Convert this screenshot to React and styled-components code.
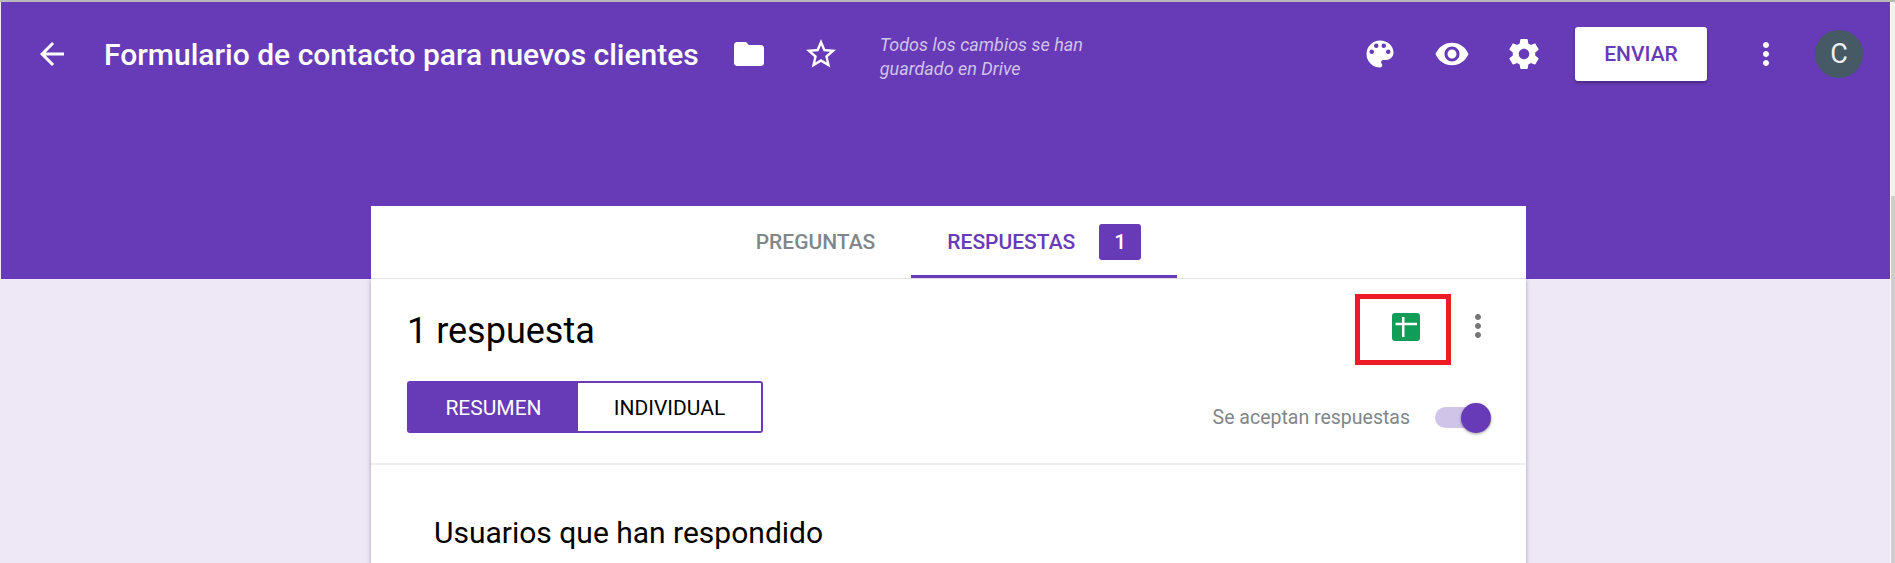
import styled, { createGlobalStyle } from "styled-components";

const purple = "#673ab7";

const GlobalStyle = createGlobalStyle`
  html, body {
    margin: 0;
    height: 100%;
    overflow: hidden;
    background: #fff;
    font-family: Roboto, "Liberation Sans", sans-serif;
  }
`;

const Window = styled.div`
  display: flex;
  height: 563px;
  padding-left: 1px;
  border-top: 2px solid #b9b9bb;
  box-sizing: border-box;
  background: #ece8f6;
`;

const Page = styled.div`
  flex: 1;
  min-width: 0;
  overflow: hidden;
  background: #ede7f6;
`;

const Scrollbar = styled.div`
  width: 4px;
  border-left: 1px solid #fff;
  background: #f1f1f1;
  padding-top: 194px;
  &::after {
    content: "";
    display: block;
    height: 100%;
    background: #cdcdcd;
  }
`;

const Hero = styled.header`
  height: 277px;
  background: ${purple};
  color: #fff;
`;

const Toolbar = styled.div`
  display: flex;
  align-items: center;
  height: 70px;
  padding: 17px 0 0 33px;
`;

const IconSlot = styled.span`
  display: flex;
  align-items: center;
  justify-content: center;
  flex: none;
  width: 36px;
  height: 36px;
  margin-left: ${(p) => p.$ml || 0}px;
`;

const Title = styled.h1`
  margin: 2px 0 0 34px;
  font-size: 30px;
  font-weight: 500;
  white-space: nowrap;
  line-height: 36px;
`;

const SaveNote = styled.div`
  width: 240px;
  margin: 5px 0 0 41px;
  font-size: 18px;
  font-style: italic;
  line-height: 24px;
  color: #d1c4e9;
`;

const Spacer = styled.div`
  flex: 1;
`;

const SendButton = styled.button`
  width: 132px;
  height: 54px;
  margin-left: 33px;
  border: 0;
  border-radius: 3px;
  background: #fff;
  color: ${purple};
  font: 500 21px Roboto, sans-serif;
  box-shadow: 0 2px 3px rgba(0, 0, 0, 0.3);
`;

const Avatar = styled.div`
  display: flex;
  align-items: center;
  justify-content: center;
  width: 48px;
  height: 48px;
  margin: 0 27px 0 31px;
  border-radius: 50%;
  background: #455a64;
  color: #eceff1;
  font-size: 27px;
`;

const Card = styled.main`
  width: 1155px;
  margin: -73px 0 0 370px;
`;

const TabBar = styled.nav`
  position: relative;
  z-index: 1;
  display: flex;
  justify-content: center;
  height: 73px;
  box-sizing: border-box;
  background: #fff;
  border-bottom: 1px solid #e0e0e0;
`;

const Tab = styled.div`
  display: flex;
  align-items: center;
  gap: 24px;
  height: 72px;
  box-sizing: border-box;
  padding: 3px 36px 0;
  font-size: 21px;
  font-weight: 500;
  color: ${(p) => (p.$active ? purple : "#80868b")};
  border-bottom: 3px solid ${(p) => (p.$active ? purple : "transparent")};
`;

const TabBadge = styled.span`
  display: flex;
  align-items: center;
  justify-content: center;
  width: 42px;
  height: 36px;
  border-radius: 3px;
  background: ${purple};
  color: #fff;
`;

const CardBody = styled.div`
  background: #fff;
  box-shadow: 0 1px 4px rgba(60, 40, 100, 0.4);
`;

const Summary = styled.section`
  display: flex;
  justify-content: space-between;
  height: 186px;
  box-sizing: border-box;
  padding: 30px 30px 0 36px;
  border-bottom: 2px solid #eeeeee;
`;

const SummaryLeft = styled.div`
  display: flex;
  flex-direction: column;
  align-items: flex-start;
`;

const ResponseCount = styled.h2`
  margin: 0 0 28px;
  font-size: 36px;
  font-weight: 400;
  line-height: 44px;
  color: #000;
`;

const Segmented = styled.div`
  display: flex;
  height: 52px;
  box-sizing: border-box;
  border: 2px solid ${purple};
  border-radius: 3px;
  overflow: hidden;
`;

const Segment = styled.div`
  display: flex;
  align-items: center;
  justify-content: center;
  width: ${(p) => p.$w}px;
  padding-top: 1px;
  font-size: 21px;
  background: ${(p) => (p.$active ? purple : "#fff")};
  color: ${(p) => (p.$active ? "#fff" : "#000")};
`;

const SummaryRight = styled.div`
  display: flex;
  flex-direction: column;
  align-items: flex-end;
`;

const Actions = styled.div`
  display: flex;
  align-items: flex-start;
  margin-top: -15px;
`;

const SheetsFrame = styled.div`
  display: flex;
  align-items: center;
  justify-content: center;
  width: 96px;
  height: 71px;
  box-sizing: border-box;
  padding: 0 0 5px 6px;
  border: 5px solid #ed1c24;
`;

const MoreSlot = styled.span`
  display: flex;
  margin: 14px 0 0 9px;
`;

const AcceptRow = styled.div`
  display: flex;
  align-items: center;
  margin: 41px 10px 0 0;
`;

const AcceptLabel = styled.span`
  font-size: 19.5px;
  line-height: 23px;
  color: #80868b;
`;

const Switch = styled.div`
  position: relative;
  width: 51px;
  height: 21px;
  margin-left: 25px;
  border-radius: 11px;
  background: #d1c4e9;
`;

const SwitchThumb = styled.span`
  position: absolute;
  top: -4px;
  right: -5px;
  width: 30px;
  height: 30px;
  border-radius: 50%;
  background: ${purple};
  box-shadow: 0 1px 3px rgba(0, 0, 0, 0.4);
`;

const Section = styled.section`
  padding: 50px 63px;
`;

const SectionTitle = styled.h3`
  margin: 0;
  font-size: 30px;
  font-weight: 400;
  line-height: 36px;
  color: #000;
`;

const Icon = ({ d, color = "#fff" }) => (
  <svg width="36" height="36" viewBox="0 0 24 24" fill={color}>
    <path d={d} />
  </svg>
);

const backPath = "M20 11H7.83l5.59-5.59L12 4l-8 8 8 8 1.41-1.41L7.83 13H20z";
const folderPath = "M10 4H4c-1.1 0-2 .9-2 2v12c0 1.1.9 2 2 2h16c1.1 0 2-.9 2-2V8c0-1.1-.9-2-2-2h-8l-2-2z";
const starPath =
  "M22 9.24l-7.19-.62L12 2 9.19 8.63 2 9.24l5.46 4.73L5.82 21 12 17.27 18.18 21l-1.63-7.03L22 9.24zM12 15.4l-3.76 2.27 1-4.28-3.32-2.88 4.38-.38L12 6.1l1.71 4.04 4.38.38-3.32 2.88 1 4.28L12 15.4z";
const palettePath =
  "M12 3a9 9 0 0 0 0 18c.83 0 1.5-.67 1.5-1.5 0-.39-.15-.74-.39-1.01-.23-.26-.38-.61-.38-.99 0-.83.67-1.5 1.5-1.5H16c2.76 0 5-2.24 5-5 0-4.42-4.03-8-9-8zm-5.5 9a1.5 1.5 0 1 1 0-3 1.5 1.5 0 0 1 0 3zm3-4a1.5 1.5 0 1 1 0-3 1.5 1.5 0 0 1 0 3zm5 0a1.5 1.5 0 1 1 0-3 1.5 1.5 0 0 1 0 3zm3 4a1.5 1.5 0 1 1 0-3 1.5 1.5 0 0 1 0 3z";
const eyePath =
  "M12 4.5C7 4.5 2.73 7.61 1 12c1.73 4.39 6 7.5 11 7.5s9.27-3.11 11-7.5c-1.73-4.39-6-7.5-11-7.5zM12 17c-2.76 0-5-2.24-5-5s2.24-5 5-5 5 2.24 5 5-2.24 5-5 5zm0-8c-1.66 0-3 1.34-3 3s1.34 3 3 3 3-1.34 3-3-1.34-3-3-3z";
const gearPath =
  "M19.43 12.98c.04-.32.07-.64.07-.98s-.03-.66-.07-.98l2.11-1.65c.19-.15.24-.42.12-.64l-2-3.46c-.12-.22-.39-.3-.61-.22l-2.49 1c-.52-.4-1.08-.73-1.69-.98l-.38-2.65A.488.488 0 0 0 14 2h-4c-.25 0-.46.18-.49.42l-.38 2.65c-.61.25-1.17.59-1.69.98l-2.49-1c-.23-.09-.49 0-.61.22l-2 3.46c-.13.22-.07.49.12.64l2.11 1.65c-.04.32-.07.65-.07.98s.03.66.07.98l-2.11 1.65c-.19.15-.24.42-.12.64l2 3.46c.12.22.39.3.61.22l2.49-1c.52.4 1.08.73 1.69.98l.38 2.65c.03.24.24.42.49.42h4c.25 0 .46-.18.49-.42l.38-2.65c.61-.25 1.17-.59 1.69-.98l2.49 1c.23.09.49 0 .61-.22l2-3.46c.12-.22.07-.49-.12-.64l-2.11-1.65zM12 15.5c-1.93 0-3.5-1.57-3.5-3.5s1.57-3.5 3.5-3.5 3.5 1.57 3.5 3.5-1.57 3.5-3.5 3.5z";
const morePath =
  "M12 8c1.1 0 2-.9 2-2s-.9-2-2-2-2 .9-2 2 .9 2 2 2zm0 2c-1.1 0-2 .9-2 2s.9 2 2 2 2-.9 2-2-.9-2-2-2zm0 6c-1.1 0-2 .9-2 2s.9 2 2 2 2-.9 2-2-.9-2-2-2z";

const SheetsIcon = () => (
  <svg width="28" height="28" viewBox="0 0 28 28">
    <rect width="28" height="28" rx="3" fill="#0f9d58" />
    <path d="M3.5 9.8h21.5v2.5H3.5zM10 4h2.5v20H10z" fill="#fff" />
  </svg>
);

export default function App() {
  return (
    <>
      <GlobalStyle />
      <Window>
        <Page>
          <Hero>
            <Toolbar>
              <IconSlot>
                <Icon d={backPath} />
              </IconSlot>
              <Title>Formulario de contacto para nuevos clientes</Title>
              <IconSlot $ml={32}>
                <Icon d={folderPath} />
              </IconSlot>
              <IconSlot $ml={36}>
                <Icon d={starPath} />
              </IconSlot>
              <SaveNote>Todos los cambios se han guardado en Drive</SaveNote>
              <Spacer />
              <IconSlot>
                <Icon d={palettePath} />
              </IconSlot>
              <IconSlot $ml={36}>
                <Icon d={eyePath} />
              </IconSlot>
              <IconSlot $ml={36}>
                <Icon d={gearPath} />
              </IconSlot>
              <SendButton>ENVIAR</SendButton>
              <IconSlot $ml={41}>
                <Icon d={morePath} />
              </IconSlot>
              <Avatar>C</Avatar>
            </Toolbar>
          </Hero>
          <Card>
            <TabBar>
              <Tab>PREGUNTAS</Tab>
              <Tab $active>
                RESPUESTAS
                <TabBadge>1</TabBadge>
              </Tab>
            </TabBar>
            <CardBody>
              <Summary>
                <SummaryLeft>
                  <ResponseCount>1 respuesta</ResponseCount>
                  <Segmented>
                    <Segment $active $w={169}>
                      RESUMEN
                    </Segment>
                    <Segment $w={183}>INDIVIDUAL</Segment>
                  </Segmented>
                </SummaryLeft>
                <SummaryRight>
                  <Actions>
                    <SheetsFrame>
                      <SheetsIcon />
                    </SheetsFrame>
                    <MoreSlot>
                      <Icon d={morePath} color="#757575" />
                    </MoreSlot>
                  </Actions>
                  <AcceptRow>
                    <AcceptLabel>Se aceptan respuestas</AcceptLabel>
                    <Switch>
                      <SwitchThumb />
                    </Switch>
                  </AcceptRow>
                </SummaryRight>
              </Summary>
              <Section>
                <SectionTitle>Usuarios que han respondido</SectionTitle>
              </Section>
            </CardBody>
          </Card>
        </Page>
        <Scrollbar />
      </Window>
    </>
  );
}
